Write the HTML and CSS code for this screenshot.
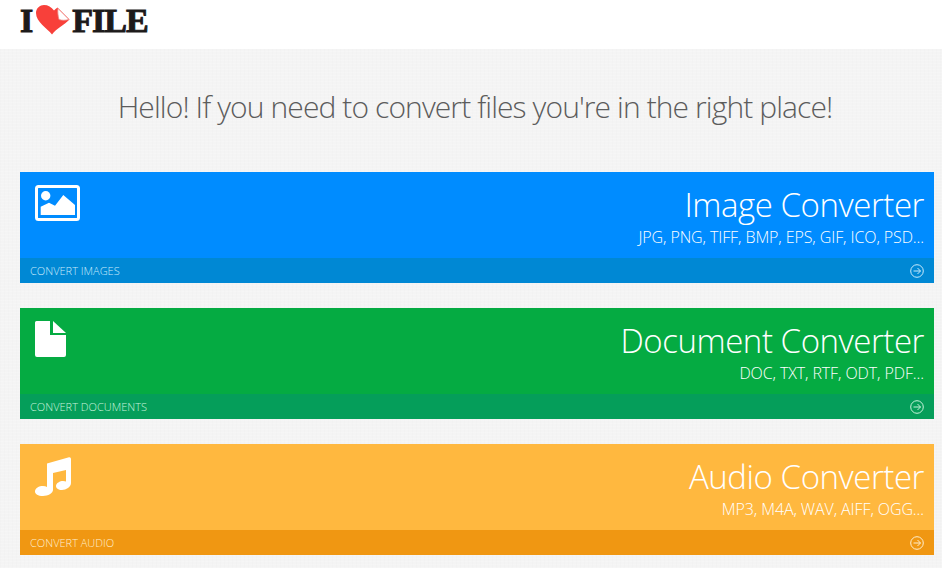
FILE: index.html
```html
<!DOCTYPE html>
<html lang="en">
<head>
    <meta charset="UTF-8">
    <meta name="viewport" content="width=device-width, initial-scale=1.0">
    <title>I Love File</title>
    <link rel="stylesheet" href="styles.css">
</head>
<body>
    <header class="top_bar">
        <a class="logo" href="#">
            <span>I</span>
            <svg class="logo_heart" viewBox="0 0 36 30" width="36" height="30">
                <path fill="#f8403a" d="M17 29.500 C12 23 1 17 1 8 C1 3 5 0 9 0 C13 0 16.500 2 19 5.500 C20 4.500 21 3.500 22.500 2.500 L34.500 14.500 C29 20 21 24 17 29.500 Z"/>
                <path fill="#fff" stroke="#ee8a86" stroke-width="0.8" d="M23 3.500 L34 14.500 C30 15.500 27 15.500 24 14.500 C23 11 22.500 7 23 3.500 Z"/>
            </svg>
            <span>FILE</span>
        </a>
    </header>

    <main class="content">
        <h1 class="hello">Hello! If you need to convert files you're in the right place!</h1>

        <a class="card card_blue" href="#">
            <div class="card_body">
                <svg class="card_icon" viewBox="0 0 45 36" width="45" height="36">
                    <rect x="1.500" y="1.500" width="42" height="33" rx="2" fill="none" stroke="#fff" stroke-width="3"/>
                    <circle cx="10.700" cy="10.700" r="4.700" fill="#fff"/>
                    <path fill="#fff" d="M5.700 30 V21.700 L14 17.700 L20 20.700 L28.300 10 L40 20 V30 Z"/>
                </svg>
                <div class="card_text">
                    <h2>Image Converter</h2>
                    <p>JPG, PNG, TIFF, BMP, EPS, GIF, ICO, PSD...</p>
                </div>
            </div>
            <div class="card_foot">
                <span>CONVERT IMAGES</span>
                <svg class="go_icon" viewBox="0 0 14 14" width="14" height="14">
                    <circle cx="7" cy="7" r="6.300" fill="none" stroke="currentColor"/>
                    <path fill="none" stroke="currentColor" d="M3.500 7 H10.500 M7.500 4 L10.500 7 L7.500 10"/>
                </svg>
            </div>
        </a>

        <a class="card card_green" href="#">
            <div class="card_body">
                <svg class="card_icon" viewBox="0 0 31 36" width="31" height="36">
                    <path fill="#fff" d="M0 1.500 Q0 0 1.500 0 H15 V14 H31 V34 Q31 36 29 36 H2 Q0 36 0 34 Z"/>
                    <path fill="#fff" d="M18 0 L31 12 H18 Z"/>
                </svg>
                <div class="card_text">
                    <h2>Document Converter</h2>
                    <p>DOC, TXT, RTF, ODT, PDF...</p>
                </div>
            </div>
            <div class="card_foot">
                <span>CONVERT DOCUMENTS</span>
                <svg class="go_icon" viewBox="0 0 14 14" width="14" height="14">
                    <circle cx="7" cy="7" r="6.300" fill="none" stroke="currentColor"/>
                    <path fill="none" stroke="currentColor" d="M3.500 7 H10.500 M7.500 4 L10.500 7 L7.500 10"/>
                </svg>
            </div>
        </a>

        <a class="card card_orange" href="#">
            <div class="card_body">
                <svg class="card_icon" viewBox="0 0 36 40" width="36" height="40">
                    <path fill="#fff" d="M12 6.500 L34 0.300 Q36 0 36 2 V26 C36 30 31 33 27 33 C23 33 21 31 21 29 C21 26 25 24 28 24 Q30 24 31 24.500 V13 L18 16 V33 C18 36 13 39 8 39 C3 39 0 37 0 34.500 C0 31 4 29 8 29 Q10.500 29 12 30 Z"/>
                </svg>
                <div class="card_text">
                    <h2>Audio Converter</h2>
                    <p>MP3, M4A, WAV, AIFF, OGG...</p>
                </div>
            </div>
            <div class="card_foot">
                <span>CONVERT AUDIO</span>
                <svg class="go_icon" viewBox="0 0 14 14" width="14" height="14">
                    <circle cx="7" cy="7" r="6.300" fill="none" stroke="currentColor"/>
                    <path fill="none" stroke="currentColor" d="M3.500 7 H10.500 M7.500 4 L10.500 7 L7.500 10"/>
                </svg>
            </div>
        </a>
    </main>
</body>
</html>
```

FILE: styles.css
```css
html, body{
    margin: 0;
    padding: 0;
}

body{
    height: 568px;
    overflow: hidden;
    font-family: "Open Sans", "Liberation Sans", sans-serif;
    background-color: #f4f4f4;
    /* faint linen weave */
    background-image:
        repeating-linear-gradient(0deg, rgba(255,255,255,0.15) 0 1px, transparent 1px 3px),
        repeating-linear-gradient(90deg, rgba(0,0,0,0.006) 0 1px, transparent 1px 4px);
}

.top_bar{
    height: 49px;
    background: #fff;
    padding-left: 20px;
}

.logo{
    display: flex;
    align-items: flex-start;
    width: max-content;
    font-family: "Liberation Serif", serif;
    font-weight: bold;
    font-size: 34px;
    line-height: 41px;
    letter-spacing: -1px;
    -webkit-text-stroke: 1px #1d1a1a;
    color: #1d1a1a;
    text-decoration: none;
}

.logo_heart{
    margin: 5px 1px 0 3px;
}

.content{
    padding: 0 8px 0 20px;
}

.hello{
    margin: 0;
    padding: 37px 4px 0 0;
    height: 86px;
    text-align: center;
    font-weight: 300;
    font-size: 30px;
    line-height: 42px;
    letter-spacing: -0.9px;
    color: #5c5c5c;
}

.card{
    display: block;
    height: 111px;
    margin-bottom: 25px;
    color: #fff;
    text-decoration: none;
}

.card_body{
    height: 86px;
    display: flex;
    justify-content: space-between;
    align-items: flex-start;
    box-sizing: border-box;
    padding: 13px 10px 0 15px;
}

.card_text{
    text-align: right;
}

.card_text h2{
    margin: 0;
    font-weight: 300;
    font-size: 33px;
    line-height: 40px;
    letter-spacing: -0.45px;
}

.card_text p{
    margin: 1px 0 0;
    font-size: 16px;
    font-weight: 300;
    line-height: 22px;
    letter-spacing: -0.1px;
}

.card_foot{
    height: 25px;
    display: flex;
    justify-content: space-between;
    align-items: center;
    padding: 0 10px;
    font-size: 11px;
    font-weight: 300;
}

.go_icon{
    display: block;
}

.card_blue{
    background: #008cff;
}

.card_blue .card_foot{
    background: #0088d4;
    color: #c8eafb;
}

.card_green{
    background: #05ab42;
}

.card_green .card_foot{
    background: #059e5a;
    color: #c6f2da;
}

.card_orange{
    background: #ffb83f;
}

.card_orange .card_foot{
    background: #f09712;
    color: #feeecf;
}
```
